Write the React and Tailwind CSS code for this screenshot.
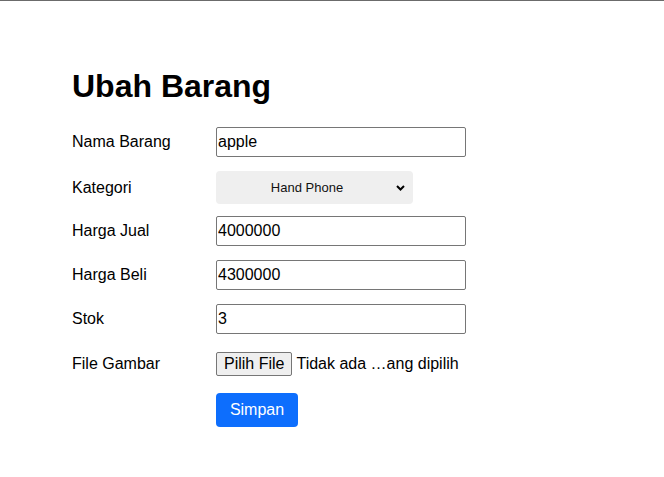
import React from "react";

function Row({ label, className = "", children }) {
  return (
    <div className={"flex items-center " + className}>
      <label className="w-[144px] shrink-0 text-[16px]">{label}</label>
      {children}
    </div>
  );
}

function TextInput({ value }) {
  return (
    <input
      type="text"
      defaultValue={value}
      className="w-[250px] h-[30px] border border-[#767676] rounded-[2px] px-[1px] text-[16px] text-black bg-white outline-none font-['Liberation_Sans',Arial,sans-serif]"
    />
  );
}

export default function App() {
  return (
    <div className="min-h-screen bg-white border-t border-[#6b6b6b] text-black font-['Liberation_Sans',Arial,sans-serif]">
      <div className="pl-[72px] pt-[67px]">
        <h1 className="text-[32px] font-bold leading-[37px]">Ubah Barang</h1>
        <form className="mt-[22px] flex flex-col" onSubmit={(e) => e.preventDefault()}>
          <Row label="Nama Barang" className="h-[30px]">
            <TextInput value="apple" />
          </Row>
          <Row label="Kategori" className="h-[33px] mt-[14px]">
            <div className="w-[197px] h-[33px] rounded-[4px] bg-[#efefef] flex items-center text-[13px] text-[#111]">
              <span className="flex-1 text-center pl-[2px]">Hand Phone</span>
              <svg width="9" height="6" viewBox="0 0 9 6" className="mr-[8px]">
                <path d="M1 1 L4.5 4.5 L8 1" fill="none" stroke="#000" strokeWidth="2" />
              </svg>
            </div>
          </Row>
          <Row label="Harga Jual" className="h-[30px] mt-[12px]">
            <TextInput value="4000000" />
          </Row>
          <Row label="Harga Beli" className="h-[30px] mt-[14px]">
            <TextInput value="4300000" />
          </Row>
          <Row label="Stok" className="h-[30px] mt-[14px]">
            <TextInput value="3" />
          </Row>
          <Row label="File Gambar" className="h-[30px] mt-[14px] pt-[1px]">
            <div className="flex items-center text-[16px]">
              <span className="h-[24px] flex items-center px-[7px] bg-[#efefef] border border-[#767676] rounded-[2px] leading-none">
                Pilih File
              </span>
              <span className="ml-[4px]">Tidak ada …ang dipilih</span>
            </div>
          </Row>
          <div className="flex mt-[15px]">
            <div className="w-[144px] shrink-0" />
            <button
              type="submit"
              className="w-[82px] h-[34px] rounded-[4px] bg-[#0d6efd] text-white text-[16px]"
            >
              Simpan
            </button>
          </div>
        </form>
      </div>
    </div>
  );
}
